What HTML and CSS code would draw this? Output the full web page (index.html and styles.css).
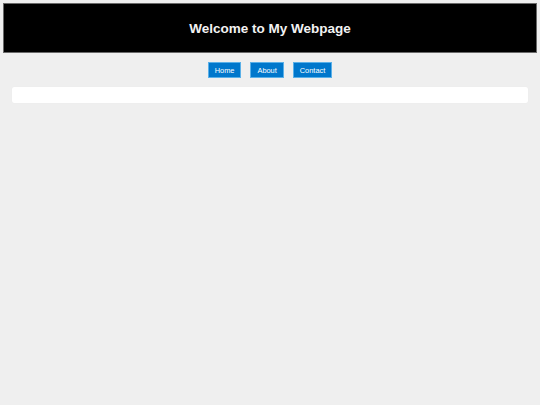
FILE: index.html
```html
<!DOCTYPE html>
<html lang="en">
<head>
<meta charset="utf-8">
<title>My Webpage</title>
<link rel="stylesheet" href="styles.css">
</head>
<body>
<header class="site-header">
  <h1 class="site-title">Welcome to My Webpage</h1>
</header>
<nav class="site-nav">
  <a class="nav-btn" href="#">Home</a>
  <a class="nav-btn" href="#">About</a>
  <a class="nav-btn" href="#">Contact</a>
</nav>
<main class="content"></main>
</body>
</html>
```
FILE: styles.css
```css
html, body {
  margin: 0;
  padding: 0;
}

body {
  background: #efefef;
  font-family: "Liberation Sans", Arial, sans-serif;
  padding: 3px;
}

.site-header {
  background: #000;
  border: 1px solid #6a6a6a;
  height: 48px;
  display: flex;
  align-items: center;
  justify-content: center;
}

.site-title {
  margin: 0;
  color: #f2f2f2;
  font-size: 13.5px;
  font-weight: bold;
}

.site-nav {
  display: flex;
  justify-content: center;
  gap: 9px;
  margin-top: 9px;
}

.nav-btn {
  display: flex;
  align-items: center;
  justify-content: center;
  height: 14px;
  padding: 0 6px;
  background: #0077cc;
  border: 1px solid #5ab0e8;
  color: #fff;
  font-size: 7.4px;
  text-decoration: none;
}

.content {
  margin: 9px 9px 0;
  height: 16px;
  background: #fff;
  border-radius: 2px;
  box-shadow: 0 0 1px rgba(0, 0, 0, 0.06);
}
```
